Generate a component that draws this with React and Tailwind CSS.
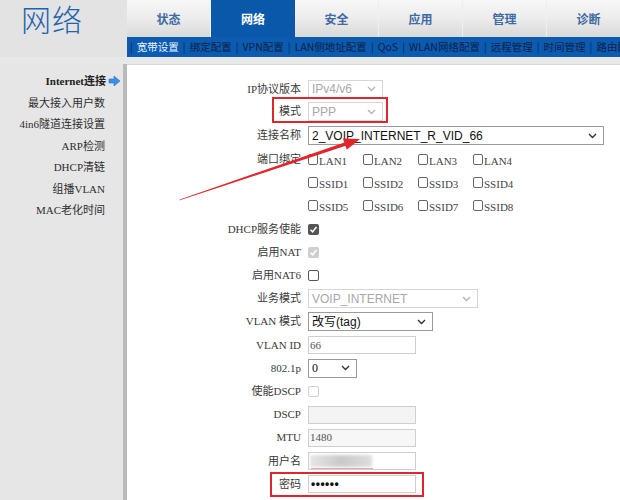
import React from "react";

const Chevron = ({ color = "#333" }) => (
  <svg width="9" height="6" viewBox="0 0 9 6" className="shrink-0">
    <path d="M1 1 L4.5 4.5 L8 1" fill="none" stroke={color} strokeWidth="1.4" />
  </svg>
);

const Select = ({ w, text, disabled, serif }) => (
  <div
    className={`flex h-[19px] items-center justify-between border px-[3px] ${w} ${
      disabled ? "border-[#d6d6d6] bg-white text-[#a8a8a8]" : "border-[#9a9a9a] bg-white text-[#111]"
    }`}
  >
    <span
      className={
        serif
          ? "font-['Liberation_Serif','Noto_Sans_CJK_SC',serif] text-[12px] leading-none"
          : "font-['Liberation_Sans','Noto_Sans_CJK_SC',sans-serif] text-[12px] leading-none"
      }
    >
      {text}
    </span>
    <span className="pr-[3px]">
      <Chevron color={disabled ? "#b5b5b5" : "#333"} />
    </span>
  </div>
);

const Input = ({ text, bg = "bg-white", children }) => (
  <div className={`relative flex h-[18px] w-[108px] items-center border border-[#cfcfcf] px-[1px] ${bg}`}>
    <span className="font-['Liberation_Serif',serif] text-[11px] leading-none text-[#555]">{text}</span>
    {children}
  </div>
);

const Box = ({ state }) => {
  if (state === "checked")
    return (
      <span className="flex h-[11px] w-[11px] items-center justify-center rounded-[2px] bg-[#555]">
        <svg width="9" height="9" viewBox="0 0 9 9">
          <path d="M1.5 4.8 L3.6 6.8 L7.5 2" fill="none" stroke="white" strokeWidth="1.5" />
        </svg>
      </span>
    );
  if (state === "checkedDisabled")
    return (
      <span className="flex h-[11px] w-[11px] items-center justify-center rounded-[2px] bg-[#cfcfcf]">
        <svg width="9" height="9" viewBox="0 0 9 9">
          <path d="M1.5 4.8 L3.6 6.8 L7.5 2" fill="none" stroke="white" strokeWidth="1.5" />
        </svg>
      </span>
    );
  if (state === "disabled")
    return <span className="block h-[11px] w-[11px] rounded-[2px] border border-[#d0d0d0] bg-white" />;
  return <span className="block h-[11px] w-[11px] rounded-[2px] border border-[#555] bg-white" />;
};

const CheckItem = ({ label }) => (
  <div className="flex w-[55px] items-end">
    <span className="block h-[11px] w-[10px] rounded-[2px] border border-[#666] bg-white" />
    <span className="ml-[1px] translate-y-[2px] font-['Liberation_Serif',serif] text-[11px] leading-none text-[#444]">
      {label}
    </span>
  </div>
);

const Row = ({ label, h = "h-[23.2px]", children }) => (
  <div className={`flex items-center ${h}`}>
    <div className="w-[175px] shrink-0 pr-[1px] text-right font-['Liberation_Serif','Noto_Sans_CJK_SC',serif] text-[11px] leading-none text-[#3a3a3a]">
      {label}
    </div>
    <div className="ml-[6px] flex items-center">{children}</div>
  </div>
);

const tabs = ["状态", "网络", "安全", "应用", "管理", "诊断"];
const subs = ["宽带设置", "绑定配置", "VPN配置", "LAN侧地址配置", "QoS", "WLAN网络配置", "远程管理", "时间管理", "路由配置"];
const side = ["最大接入用户数", "4in6隧道连接设置", "ARP检测", "DHCP清链", "组播VLAN", "MAC老化时间"];

export default function App() {
  return (
    <div className="relative h-[500px] w-[620px] overflow-hidden bg-[#e6e6e6]">
      {/* header row */}
      <div className="flex h-[37px] overflow-hidden">
        <div className="flex w-[127px] shrink-0 items-center bg-[#e3e3e3] pl-[21px]">
          <span className="font-['Noto_Sans_CJK_SC',sans-serif] text-[30px] font-light leading-[37px] tracking-[1px] text-[#1f64ae]">
            网络
          </span>
        </div>
        <div className="flex flex-1 overflow-hidden">
          {tabs.map((t, i) =>
            i === 1 ? (
              <div
                key={t}
                className="flex w-[84px] shrink-0 items-center justify-center bg-[#0a58aa] font-['Noto_Sans_CJK_SC',sans-serif] text-[12px] font-bold text-white"
              >
                {t}
              </div>
            ) : (
              <div
                key={t}
                className="flex w-[84px] shrink-0 items-center justify-center border-r border-[#eeeeee] bg-gradient-to-b from-[#f7f7f7] via-[#ececec] to-[#d9d9d9] font-['Noto_Sans_CJK_SC',sans-serif] text-[12px] font-bold text-[#3f6aa3]"
              >
                {t}
              </div>
            )
          )}
        </div>
      </div>
      {/* subnav row */}
      <div className="flex h-[20px]">
        <div className="w-[127px] shrink-0 bg-[#e3e3e3]" />
        <div className="flex min-w-0 flex-1 items-center gap-[4px] overflow-hidden whitespace-nowrap bg-[#0b5bb0] pl-[3px] font-['Noto_Sans_CJK_SC',sans-serif] text-[10.5px] leading-none">
          {subs.map((s, i) => (
            <React.Fragment key={s}>
              <span className="shrink-0 text-[#0a2a5a]">|</span>
              <span className={`shrink-0 ${i === 0 ? "text-[#e9f1ff]" : "text-[#0c2249]"}`}>{s}</span>
            </React.Fragment>
          ))}
        </div>
      </div>
      <div className="h-[7px] bg-[#e8e8e8]" />
      {/* body */}
      <div className="flex h-[436px]">
        <div className="w-[127px] shrink-0 border-r-4 border-[#bababa] bg-[#e6e6e6] pt-[7px]">
          <div className="flex h-[21.5px] items-center justify-end pr-[2px]">
            <span className="font-['Liberation_Serif','Noto_Sans_CJK_SC',serif] text-[11px] font-bold leading-none text-[#222]">
              Internet连接
            </span>
            <svg width="13" height="12" viewBox="0 0 13 12" className="ml-[2px] -mt-[2px]">
              <path d="M1 4 H6 V1 L12 6 L6 11 V8 H1 Z" fill="#3d8fe6" stroke="#2a6fc4" strokeWidth="0.6" strokeLinejoin="round" />
            </svg>
          </div>
          {side.map((s) => (
            <div key={s} className="flex h-[21.5px] items-center justify-end pr-[18px]">
              <span className="font-['Liberation_Serif','Noto_Sans_CJK_SC',serif] text-[11px] leading-none text-[#2e2e2e]">
                {s}
              </span>
            </div>
          ))}
        </div>
        <div className="flex-1 border-t border-[#d8d8d8] bg-white pt-[13px]">
          <Row label="IP协议版本" h="h-[22px]">
            <Select w="w-[75px] h-[18px]" text="IPv4/v6" disabled />
          </Row>
          <Row label="模式" h="h-[23px]">
            <Select w="w-[75px] h-[18px]" text="PPP" disabled />
          </Row>
          <Row label="连接名称" h="h-[25px]">
            <Select w="w-[296px]" text="2_VOIP_INTERNET_R_VID_66" />
          </Row>
          <Row label="端口绑定">
            {["LAN1", "LAN2", "LAN3", "LAN4"].map((l) => (
              <CheckItem key={l} label={l} />
            ))}
          </Row>
          <Row label="">
            {["SSID1", "SSID2", "SSID3", "SSID4"].map((l) => (
              <CheckItem key={l} label={l} />
            ))}
          </Row>
          <Row label="">
            {["SSID5", "SSID6", "SSID7", "SSID8"].map((l) => (
              <CheckItem key={l} label={l} />
            ))}
          </Row>
          <Row label="DHCP服务使能">
            <Box state="checked" />
          </Row>
          <Row label="启用NAT">
            <Box state="checkedDisabled" />
          </Row>
          <Row label="启用NAT6">
            <Box />
          </Row>
          <Row label="业务模式">
            <Select w="w-[170px] h-[18px]" text="VOIP_INTERNET" disabled />
          </Row>
          <Row label="VLAN 模式">
            <Select w="w-[125px] h-[18px]" text="改写(tag)" />
          </Row>
          <Row label="VLAN ID">
            <Input text="66" />
          </Row>
          <Row label="802.1p">
            <Select w="w-[49px] h-[18px]" text="0" serif />
          </Row>
          <Row label="使能DSCP">
            <Box state="disabled" />
          </Row>
          <Row label="DSCP">
            <Input text="" bg="bg-[#f4f4f4]" />
          </Row>
          <Row label="MTU">
            <Input text="1480" bg="bg-[#f7f7f7]" />
          </Row>
          <Row label="用户名">
            <Input text="">
              <div className="absolute left-[1px] top-[2px] h-[12px] w-[62px] bg-gradient-to-r from-[#e6e6e6] via-[#c9c9c9] to-[#dedede] blur-[1.5px]" />
              <div className="absolute left-[2px] top-[15px] h-[1px] w-[62px] bg-[#e7a9a9]" />
            </Input>
          </Row>
          <Row label="密码">
            <Input text="">
              <span className="ml-[1px] font-['Liberation_Sans',sans-serif] text-[12px] font-bold leading-none tracking-[0.5px] text-[#111]">
                ••••••
              </span>
            </Input>
          </Row>
        </div>
      </div>

      {/* annotations */}
      <div className="pointer-events-none absolute left-[272px] top-[97px] h-[26px] w-[116px] border-2 border-[#e0262a]" />
      <div className="pointer-events-none absolute left-[270px] top-[472px] h-[25px] w-[154px] border-2 border-[#e0262a]" />
      <svg className="pointer-events-none absolute left-0 top-0" width="620" height="500" viewBox="0 0 620 500">
        <polygon points="179,200.5 346.5,145.6 345.2,142.2 180.5,199.2" fill="#e3252a" />
        <polygon points="360,139 346.8,149.8 342.9,138.5" fill="#e3252a" />
      </svg>
    </div>
  );
}
